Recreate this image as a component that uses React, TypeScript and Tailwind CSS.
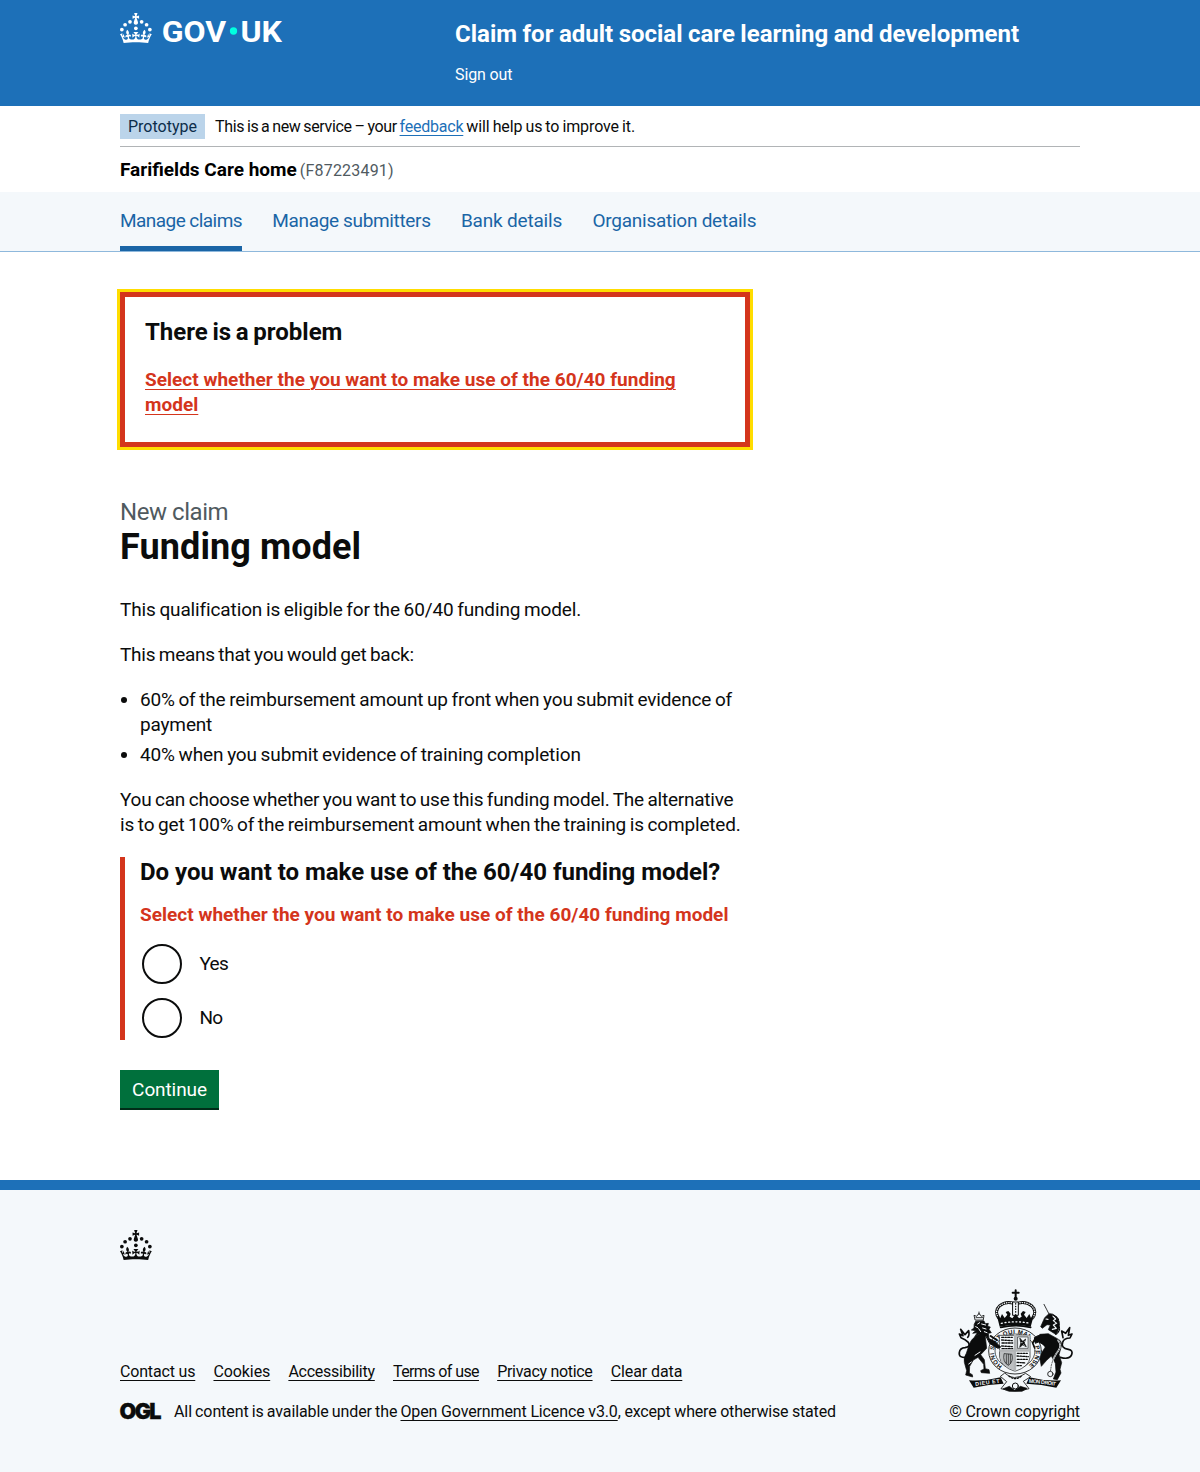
import type { ReactNode } from "react";

function Crown() {
  return (
    <>
      <circle cx="20" cy="17.6" r="3.7" />
      <circle cx="10.2" cy="23.5" r="3.7" />
      <circle cx="3.7" cy="33.2" r="3.7" />
      <circle cx="31.7" cy="30.6" r="3.7" />
      <circle cx="43.3" cy="17.6" r="3.7" />
      <circle cx="53.2" cy="23.5" r="3.7" />
      <circle cx="59.7" cy="33.2" r="3.7" />
      <path d="M33.1,9.8c.2-.1.3-.3.5-.5l4.6,2.4v-6.8l-4.6,1.5c-.1-.2-.3-.3-.5-.5l1.9-5.9h-6.7l1.9,5.9c-.2.1-.3.3-.5.5l-4.6-1.5v6.8l4.6-2.4c.1.2.3.3.5.5l-2.6,8c-.9,2.8,1.2,5.7,4.1,5.7h0c3,0,5.1-2.9,4.1-5.7l-2.6-8ZM37,37.9s-3.4,3.8-4.1,6.1c2.2,0,4.2-.5,6.4-2.8l-.7,8.5c-2-2.8-4.4-4.1-5.7-3.8.1,3.1.5,6.7,5.8,7.2,3.7.3,6.7-1.5,7-3.8.4-2.6-2-4.3-3.7-1.6-1.4-4.5,2.4-6.1,4.9-3.2-1.9-4.5-1.8-7.7,2.4-10.9,3,4,2.6,7.3-1.2,11.1,2.4-1.3,6.2,0,4,4.6-1.2-2.8-3.7-2.2-4.2.2-.3,1.7.7,3.7,3,4.2,1.9.3,4.7-.9,7-5.9-1.3,0-2.4.7-3.9,1.7l2.4-8c.6,2.3,1.4,3.7,2.2,4.5.6-1.6.5-2.8,0-5.3l5,1.8c-2.6,3.6-5.2,8.7-7.3,17.5-7.4-1.1-15.7-1.7-24.5-1.7h0c-8.8,0-17.1.6-24.5,1.7-2.1-8.9-4.7-13.9-7.3-17.5l5-1.8c-.5,2.5-.6,3.7,0,5.3.8-.8,1.6-2.3,2.2-4.5l2.4,8c-1.5-1-2.6-1.7-3.9-1.7,2.3,5,5.2,6.2,7,5.9,2.3-.4,3.3-2.4,3-4.2-.5-2.4-3-3.1-4.2-.2-2.2-4.6,1.6-6,4-4.6-3.7-3.7-4.2-7.1-1.2-11.1,4.2,3.2,4.3,6.4,2.4,10.9,2.5-2.8,6.3-1.3,4.9,3.2-1.8-2.7-4.1-1-3.7,1.6.3,2.3,3.3,4.1,7,3.8,5.4-.5,5.7-4.2,5.8-7.2-1.3-.2-3.7,1-5.7,3.8l-.7-8.5c2.2,2.3,4.2,2.7,6.4,2.8-.7-2.3-4.1-6.1-4.1-6.1h10.6,0Z" />
    </>
  );
}

function GovLogo() {
  return (
    <svg viewBox="0 0 324 60" className="block h-[30px] w-[162px] overflow-visible fill-white" aria-label="GOV.UK">
      <Crown />
      <text x="83.5" y="57" fontFamily="Roboto, sans-serif" fontWeight="700" fontSize="59.5" textLength="129" lengthAdjust="spacingAndGlyphs">GOV</text>
      <circle cx="227" cy="36" r="7.3" fill="#00ffe0" />
      <text x="241" y="57" fontFamily="Roboto, sans-serif" fontWeight="700" fontSize="59.5" textLength="83" lengthAdjust="spacingAndGlyphs">UK</text>
    </svg>
  );
}

function CoatOfArms() {
  return (
    <svg viewBox="51 27 351 309" className="h-[103px] w-[117px]" fill="none" stroke="#0b0c0c" strokeWidth="5" strokeLinecap="round" strokeLinejoin="round">
      {/* lion */}
      <path d="M105 119l-3-13 8 3 7-9 7 9 8-3-2 13zM117 96v7M108 113h20" strokeWidth="2.5" />
      <path d="M107 124q-7 9-5 20l-8 6 13 2-9 8 14-2-8 12 14-7-4 12 12-7 4 8 7-8 10 7-2-15 9-2-7-10 4-7-8-2 2-9-9 1-4-8z" fill="#0b0c0c" strokeWidth="2" />
      <path d="M125 132l12 3M128 144l10 3M116 146l6 9M107 140l6 3M119 128l-6 4M133 155l8 3" stroke="#f4f8fb" strokeWidth="3" />
      <path d="M114 165q-20 10-26 28l-9 27q-9 14-6 27l7 25-3 13 21 6-1-7-9-5 1-20 11-19 14-8 17 21 1 14-10 5 2 6 25 2-2-11-11-3-3-27-11-15 18-19-5-42z" fill="#0b0c0c" strokeWidth="2" />
      <path d="M82 232q-27 3-24-15 2-13 17-14 18-2 10-16-8-9-22-14l-5-11 11 5-7-19 13 16 11-12q3 15-3 20" strokeWidth="5" />
      <path d="M105 226l15-10M86 252l8-6" stroke="#f4f8fb" strokeWidth="3" />

      {/* unicorn */}
      <path d="M312 73l16 31" strokeWidth="2.5" strokeDasharray="7 2" />
      <path d="M327 101l-13 12-12 27 5 5 14-11 10 1-6 14 22 14q12-14 11-31l-7-20-12-9z" fill="#0b0c0c" strokeWidth="2" />
      <path d="M339 108l8 9-7 5 10 8-10 5 9 10-12 3M318 117l6 1" stroke="#f4f8fb" strokeWidth="3.5" />
      <path d="M341 106q20 9 15 31 8 15-10 27" strokeWidth="4" strokeDasharray="4 4" />
      <path d="M300 163l25-2 27 15q18 8 11 27l-6 21 8 24-5 20 3 11-11 20-12-2 8-21-2-26-12-22-14 13-16 18-6-30 18-28-17-17z" fill="#0b0c0c" strokeWidth="2" />
      <path d="M354 181q13 13 1 31-14 17-21 44l-3 20" stroke="#f4f8fb" strokeWidth="5" />
      <path d="M354 181q13 13 1 31-14 17-21 44l-3 20" strokeWidth="2" strokeDasharray="4 4" />
      <circle cx="331" cy="282" r="8" strokeWidth="2.5" fill="#f4f8fb" />
      <path d="M361 232q28 8 34-8 5-13-10-16-23-3-17-21 4-13 22-13l6-12-11 4 4-23-12 17-12-7 4 20" strokeWidth="5" />

      {/* garter */}
      <ellipse cx="225" cy="213" rx="79" ry="69" fill="#f4f8fb" strokeWidth="2.5" />
      <ellipse cx="225" cy="213" rx="60" ry="51" strokeWidth="2" />
      <path id="garter" d="M187 258A63 54 0 1 1 263 258" stroke="none" />
      <text fill="#0b0c0c" stroke="none" fontFamily="Liberation Sans, sans-serif" fontSize="18" fontWeight="700">
        <textPath href="#garter" textLength="284">HONI SOIT QUI MAL Y PENSE</textPath>
      </text>

      {/* shield */}
      <path d="M179 166h91v66q-2 28-45 42-43-14-46-42z" fill="#f4f8fb" strokeWidth="2" />
      <path d="M180 212h45v60q-41-12-45-40zM226 166h43v45h-43z" fill="#bcbfc1" stroke="none" />
      <path d="M185 172h33M185 180l34 2M186 189h33M185 198l33 2M186 206h32" strokeWidth="4" strokeDasharray="7 4 3 4" />
      <path d="M234 171h30v34h-30z" fill="#f4f8fb" strokeWidth="1.5" />
      <path d="M240 175l8 9 9-7-4 12 6 11-11-5-9 7 3-12z" fill="#0b0c0c" strokeWidth="2" />
      <path d="M243 188h4M252 183l3 2M250 194l3 2" stroke="#f4f8fb" strokeWidth="2" />
      <path d="M232 220h33M231 228l34 2M232 238h30M231 247l26 2M231 257h16" strokeWidth="4" strokeDasharray="6 4 3 4" />
      <path d="M192 222q-5 24 13 34 16-10 11-32zM199 224v26M205 223v30M211 224v26" strokeWidth="2" />
      <path d="M225 164v108M181 212h88" stroke="#b1b4b6" strokeWidth="7" />

      {/* forelegs over the garter */}
      <path d="M140 172l26 14 16 15-8 4-24-14z" fill="#0b0c0c" strokeWidth="3" />
      <path d="M152 168l18 12" strokeWidth="6" />
      <path d="M322 168q-22-8-39 5l3 17 9-4 16 7 10 13 15-14z" fill="#0b0c0c" strokeWidth="3" />
      <path d="M286 175l-8 14 6 15" strokeWidth="5" />

      {/* royal crown */}
      <path d="M227 31v22M218 38h18" strokeWidth="6" />
      <circle cx="227" cy="56" r="6" fill="#0b0c0c" stroke="none" />
      <path d="M176 114C156 86 188 60 222 70M278 114C298 86 266 60 232 70" strokeWidth="9" />
      <path d="M176 114C156 86 188 60 222 70M278 114C298 86 266 60 232 70" stroke="#f4f8fb" strokeWidth="4" strokeDasharray="1 6" />
      <path d="M219 66h16v40h-16z" strokeWidth="3" fill="#f4f8fb" />
      <path d="M227 71v30" strokeWidth="4" strokeDasharray="1 7" />
      <path d="M171 108l10 6 5-12 8 12 8-10-5-8 8-3 7 8-3 9 8 5 10-14 10 14 8-5-3-9 7-8 8 3-5 8 8 10 8-12 5 12 8-6-9 32q-46-10-93 0z" fill="#0b0c0c" stroke="none" />
      <path d="M184 130q43-9 86 0" stroke="#f4f8fb" strokeWidth="4" strokeDasharray="3 8" />
      <path d="M182 142q45-10 90 0" strokeWidth="5" />

      {/* motto ribbon */}
      <path d="M195 280q26 26 62 0l15 10-22 14 17 22q-42 14-84 0l17-21-18-15z" fill="#f4f8fb" strokeWidth="2.5" />
      <path d="M207 288q18 16 39-1" strokeWidth="4" strokeDasharray="4 5" />
      <path d="M87 301q50 3 95-9l9 19q-45 2-90 12zM363 301q-50 3-95-9l-9 19q45 2 90 12z" fill="#0b0c0c" stroke="none" />
      <path id="motto-left" d="M107 318q36-6 76-10" stroke="none" />
      <path id="motto-right" d="M266 308q42 3 84 10" stroke="none" />
      <g fill="#f4f8fb" stroke="none" fontFamily="Liberation Sans, sans-serif" fontSize="16" fontWeight="700">
        <text><textPath href="#motto-left" textLength="73">DIEU ET</textPath></text>
        <text><textPath href="#motto-right" textLength="81">MON DROIT</textPath></text>
      </g>
      <path d="M190 326l18-7 16 12 17-12 20 6-15 9h-38z" fill="#0b0c0c" strokeWidth="2" />
      <circle cx="226" cy="318" r="9" fill="#f4f8fb" strokeWidth="3" />
    </svg>
  );
}

function TextLink({ children, className = "" }: { children: ReactNode; className?: string }) {
  return (
    <a href="#" className={"underline decoration-1 underline-offset-[3px] " + className}>
      {children}
    </a>
  );
}

function Radio({ label }: { label: string }) {
  return (
    <label className="flex h-11 items-center pl-0.5">
      <input type="radio" name="fundingModel" className="size-10 appearance-none rounded-full border-2 border-[#0b0c0c] bg-white" />
      <span className="pb-0.5 pl-[17.5px] tracking-[-0.7px]">{label}</span>
    </label>
  );
}

export default function App() {
  return (
    <div className="min-h-[1472px] bg-white font-['Roboto',sans-serif] text-[19px] leading-[25px] text-[#0b0c0c]">
      <header className="h-[106px] bg-[#1d70b8] text-white">
        <div className="mx-auto flex w-[960px]">
          <div className="w-[335px] pt-[13px]">
            <GovLogo />
          </div>
          <div className="pt-[19px]">
            <p className="text-2xl leading-[30px] font-bold [word-spacing:-0.5px]">Claim for adult social care learning and development</p>
            <a href="#" className="mt-4 block text-base leading-5 tracking-[-0.12px]">Sign out</a>
          </div>
        </div>
      </header>

      <div className="mx-auto w-[960px]">
        <div className="flex h-[41px] items-start border-b border-[#b1b4b6] pt-2 text-base leading-[25px]">
          <strong className="mr-[10px] h-[25px] w-[85px] bg-[#bbd4ea] pl-2 font-normal text-[#0c2d4a]">Prototype</strong>
          <p className="whitespace-pre">
            <span className="tracking-[-0.36px] [word-spacing:-0.8px]">This is a new service – your </span>
            <TextLink className="tracking-[-0.23px] text-[#1d70b8]">feedback</TextLink>
            <span className="tracking-[-0.11px] [word-spacing:-0.8px]"> will help us to improve it.</span>
          </p>
        </div>
        <div className="flex h-[45px] items-baseline gap-[3px] pt-[10px]">
          <strong className="text-black">Farifields Care home</strong>
          <span className="text-base tracking-[0.2px] text-[#505a5f]">(F87223491)</span>
        </div>
      </div>

      <nav className="h-[60px] border-b border-[#8eb8dc] bg-[#f4f8fb] text-[#1a65a6]">
        <div className="mx-auto flex h-[59px] w-[960px] gap-[30.3px]">
          <a href="#" className="border-b-[5px] border-[#1a65a6] pt-4 tracking-[-0.55px]">Manage claims</a>
          <a href="#" className="pt-4 tracking-[-0.35px]">Manage submitters</a>
          <a href="#" className="pt-4 tracking-[-0.18px]">Bank details</a>
          <a href="#" className="pt-4 tracking-[-0.25px]">Organisation details</a>
        </div>
      </nav>

      <main className="mx-auto h-[928px] w-[960px] pt-10">
        <div className="w-[630px]">
          <div className="mb-[50px] h-[155px] border-[5px] border-[#d4351c] p-5 outline-3 outline-[#ffdd00]">
            <h2 className="mb-5 text-2xl leading-[30px] font-bold [word-spacing:-1.3px]">There is a problem</h2>
            <TextLink className="font-bold tracking-[0.025px] text-[#d4351c]">Select whether the you want to make use of the 60/40 funding model</TextLink>
          </div>

          <span className="block text-2xl leading-[30px] tracking-[-0.45px] text-[#505a5f]">New claim</span>
          <h1 className="mb-[30px] text-4xl leading-10 font-bold tracking-[0.1px]">Funding model</h1>

          <div className="[word-spacing:-0.9px]">
            <p className="mb-5 tracking-[-0.13px]">This qualification is eligible for the 60/40 funding model.</p>
            <p className="mb-5 tracking-[-0.26px]">This means that you would get back:</p>
            <ul className="mb-5 list-disc pl-5">
              <li className="mb-[5px] tracking-[-0.16px]">60% of the reimbursement amount up front when you submit evidence of payment</li>
              <li className="tracking-[-0.12px]">40% when you submit evidence of training completion</li>
            </ul>
            <p className="mb-5 whitespace-nowrap">
              <span className="tracking-[-0.23px]">You can choose whether you want to use this funding model. The alternative</span>
              <br />
              <span className="tracking-[-0.16px]">is to get 100% of the reimbursement amount when the training is completed.</span>
            </p>
          </div>

          <fieldset className="h-[183px] border-l-[5px] border-[#d4351c] pl-[15px]">
            <h2 className="mb-[15px] text-2xl leading-[30px] font-bold tracking-[-0.02px]">Do you want to make use of the 60/40 funding model?</h2>
            <p className="mb-[15px] font-bold tracking-[0.02px] text-[#d4351c]">Select whether the you want to make use of the 60/40 funding model</p>
            <div className="flex flex-col gap-[10px]">
              <Radio label="Yes" />
              <Radio label="No" />
            </div>
          </fieldset>

          <button className="mt-[30px] h-[38px] w-[99px] bg-[#00703c] tracking-[-0.1px] text-white shadow-[0_2px_0_#002d18]">Continue</button>
        </div>
      </main>

      <footer className="h-[292px] border-t-[10px] border-[#1d70b8] bg-[#f4f8fb] pt-10 text-base leading-5">
        <div className="mx-auto w-[960px]">
          <svg viewBox="0 0 64 60" className="block h-[30px] w-8 fill-[#0b0c0c]">
            <Crown />
          </svg>
          <div className="mt-[29px] flex items-end justify-between">
            <div>
              <div className="mb-5 flex gap-[18.2px]">
                <TextLink className="tracking-[-0.17px]">Contact us</TextLink>
                <TextLink className="tracking-[-0.1px]">Cookies</TextLink>
                <TextLink className="tracking-[-0.24px]">Accessibility</TextLink>
                <TextLink className="tracking-[-0.6px]">Terms of use</TextLink>
                <TextLink className="tracking-[-0.3px]">Privacy notice</TextLink>
                <TextLink className="tracking-[-0.1px]">Clear data</TextLink>
              </div>
              <div className="flex">
                <svg viewBox="0 0 41 17" className="mt-px mr-[13px] h-[17px] w-[41px] overflow-visible fill-[#0b0c0c] stroke-[#0b0c0c]" strokeWidth="0.3">
                  <text x="-0.5" y="16" fontFamily="Inter, sans-serif" fontWeight="900" fontSize="21.5" letterSpacing="-1.6" textLength="40.5" lengthAdjust="spacingAndGlyphs">OGL</text>
                </svg>
                <p className="whitespace-pre">
                  <span className="tracking-[-0.1px] [word-spacing:-0.7px]">All content is available under the </span>
                  <TextLink className="tracking-[-0.14px]">Open Government Licence v3.0</TextLink>
                  <span className="tracking-[-0.2px]">, except where otherwise stated</span>
                </p>
              </div>
            </div>
            <div className="flex flex-col">
              <div className="mb-2.5 pl-2">
                <CoatOfArms />
              </div>
              <TextLink className="tracking-[-0.1px]">© Crown copyright</TextLink>
            </div>
          </div>
        </div>
      </footer>
    </div>
  );
}
